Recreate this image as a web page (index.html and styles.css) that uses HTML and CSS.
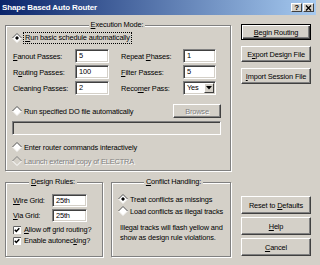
FILE: index.html
```html
<!DOCTYPE html>
<html lang="en">
<head>
    <meta charset="UTF-8">
    <title>Shape Based Auto Router</title>
    <link rel="stylesheet" href="styles.css">
</head>
<body>
    <svg class="sprite" xmlns="http://www.w3.org/2000/svg">
        <symbol id="radio" viewBox="0 0 10 10">
            <path d="M5 0.5 L9.5 5 L5 9.5 L0.5 5 Z" fill="#fff"/>
            <path d="M0.5 5 L5 0.5 L9.5 5" fill="none" stroke="#505050"/>
            <path d="M0.5 5 L5 9.5 L9.5 5" fill="none" stroke="#f4f3f0"/>
        </symbol>
        <symbol id="radio-on" viewBox="0 0 10 10">
            <path d="M5 0.5 L9.5 5 L5 9.5 L0.5 5 Z" fill="#fff"/>
            <path d="M0.5 5 L5 0.5 L9.5 5" fill="none" stroke="#505050"/>
            <path d="M0.5 5 L5 9.5 L9.5 5" fill="none" stroke="#f4f3f0"/>
            <path d="M5 3 L7 5 L5 7 L3 5 Z" fill="#000"/>
        </symbol>
        <symbol id="radio-off" viewBox="0 0 10 10">
            <path d="M5 0.5 L9.5 5 L5 9.5 L0.5 5 Z" fill="#d4d0c8"/>
            <path d="M0.5 5 L5 0.5 L9.5 5" fill="none" stroke="#808080"/>
            <path d="M0.5 5 L5 9.5 L9.5 5" fill="none" stroke="#fff"/>
        </symbol>
        <symbol id="check" viewBox="0 0 8 8">
            <rect width="8" height="8" fill="#fff"/>
            <path d="M0.5 8 V0.5 H8" fill="none" stroke="#606060"/>
            <path d="M1.8 3.8 L3.3 5.4 L6.3 2.2" fill="none" stroke="#000" stroke-width="1.5"/>
        </symbol>
    </svg>

    <div class="window">
        <div class="titlebar">
            <span class="title">Shape Based Auto Router</span>
            <div class="caption-btns">
                <span class="cap-btn">?</span>
                <span class="cap-btn">
                    <svg width="7" height="6" viewBox="0 0 7 6"><path d="M1 0.5 L6 5.5 M6 0.5 L1 5.5" stroke="#000" stroke-width="1.3"/></svg>
                </span>
            </div>
        </div>

        <div class="client">
            <div class="left">
                <fieldset class="group exec">
                    <legend><u>E</u>xecution Mode:</legend>
                    <div class="radio first">
                        <svg class="rb"><use href="#radio-on"/></svg>
                        <span class="focus"><u>R</u>un basic schedule automatically</span>
                    </div>

                    <div class="fields">
                        <span class="lbl"><u>F</u>anout Passes:</span>
                        <span class="edit short">5</span>
                        <span class="lbl">Repeat <u>P</u>hases:</span>
                        <span class="edit">1</span>

                        <span class="lbl">R<u>o</u>uting Passes:</span>
                        <span class="edit short">100</span>
                        <span class="lbl"><u>F</u>ilter Passes:</span>
                        <span class="edit">5</span>

                        <span class="lbl">Cleaning Passes:</span>
                        <span class="edit short">2</span>
                        <span class="lbl">Reco<u>m</u>er Pass:</span>
                        <span class="edit combo">
                            <span>Yes</span>
                            <span class="drop">
                                <svg width="6" height="4" viewBox="0 0 6 4"><path d="M0 0 H6 L3 3.5 Z" fill="#000"/></svg>
                            </span>
                        </span>
                    </div>

                    <div class="do-row">
                        <div class="radio">
                            <svg class="rb"><use href="#radio"/></svg>
                            <span>Run specified DO file automatically</span>
                        </div>
                        <button class="btn browse" disabled><span>Browse</span></button>
                    </div>
                    <div class="edit wide"></div>

                    <div class="radio interactive">
                        <svg class="rb"><use href="#radio"/></svg>
                        <span>Enter router commands interactively</span>
                    </div>
                    <div class="radio launch">
                        <svg class="rb"><use href="#radio-off"/></svg>
                        <span class="disabled">Launch external copy of ELECTRA</span>
                    </div>
                </fieldset>

                <div class="lower">
                    <fieldset class="group design">
                        <legend><u>D</u>esign Rules:</legend>
                        <div class="grid-row">
                            <span class="lbl"><u>W</u>ire Grid:</span>
                            <span class="edit">25th</span>
                        </div>
                        <div class="grid-row">
                            <span class="lbl"><u>V</u>ia Grid:</span>
                            <span class="edit">25th</span>
                        </div>
                        <div class="checks">
                            <div class="checkbox">
                                <svg class="cb"><use href="#check"/></svg>
                                <span><u>A</u>llow off grid routing?</span>
                            </div>
                            <div class="checkbox">
                                <svg class="cb"><use href="#check"/></svg>
                                <span>Enable autonec<u>k</u>ing?</span>
                            </div>
                        </div>
                    </fieldset>

                    <fieldset class="group conflict">
                        <legend><u>C</u>onflict Handling:</legend>
                        <div class="radio">
                            <svg class="rb"><use href="#radio-on"/></svg>
                            <span>Treat conflicts as missings</span>
                        </div>
                        <div class="radio">
                            <svg class="rb"><use href="#radio"/></svg>
                            <span>Load conflicts as illegal tracks</span>
                        </div>
                        <p class="note">Illegal tracks will flash yellow and<br>show as design rule violations.</p>
                    </fieldset>
                </div>
            </div>

            <div class="right">
                <div class="stack">
                    <button class="btn default"><span><u>B</u>egin Routing</span></button>
                    <button class="btn"><span>E<u>x</u>port Design File</span></button>
                    <button class="btn"><span><u>I</u>mport Session File</span></button>
                </div>
                <div class="stack bottom">
                    <button class="btn"><span>Reset to <u>D</u>efaults</span></button>
                    <button class="btn"><span><u>H</u>elp</span></button>
                    <button class="btn"><span><u>C</u>ancel</span></button>
                </div>
            </div>
        </div>
    </div>
</body>
</html>
```

FILE: styles.css
```css
* {
    box-sizing: border-box;
}
body {
    margin: 0;
    background: #d4d0c8;
    font-family: "Liberation Sans", Arial, sans-serif;
    font-size: 7.4px;
    letter-spacing: -0.15px;
    color: #000;
    white-space: nowrap;
}
.sprite {
    display: none;
}
.window {
    width: 320px;
    height: 265px;
    overflow: hidden;
    display: flex;
    flex-direction: column;
}
.titlebar {
    height: 15px;
    margin-right: 4px;
    padding: 0 2px 0 2px;
    display: flex;
    align-items: center;
    background: linear-gradient(to right, #0a246a, #a6caf0);
    color: #fff;
    font-weight: bold;
    font-size: 8px;
}
.caption-btns {
    margin-left: auto;
    display: flex;
    gap: 1px;
}
.cap-btn {
    width: 11px;
    height: 9px;
    display: flex;
    align-items: center;
    justify-content: center;
    background: #d4d0c8;
    border: 1px solid;
    border-color: #fff #404040 #404040 #fff;
    color: #000;
    font-size: 8px;
    line-height: 1;
}
.client {
    flex: 1;
    display: flex;
    gap: 10px;
    padding: 5px 9px 8px 5px;
}
.left {
    width: 226px;
    display: flex;
    flex-direction: column;
}
.right {
    width: 70px;
    display: flex;
    flex-direction: column;
    padding: 4px 0 1px 0;
}

/* group boxes */
.group {
    margin: 0;
    min-width: 0;
    padding: 0 9px 3px 7px;
    border: 1px solid #808080;
    box-shadow: inset 1px 1px #fff, 1px 1px #fff;
}
.group legend {
    margin: 0 auto;
    padding: 0 2px;
    line-height: 10px;
    background: #d4d0c8;
}

/* radios and checks */
.radio {
    display: flex;
    align-items: center;
    gap: 2px;
    height: 12px;
    margin-left: -1px;
}
.rb {
    width: 10px;
    height: 10px;
    flex: none;
}
.radio.first {
    margin-top: 2px;
}
.focus {
    outline: 1px dotted #000;
    padding: 0 1px;
    line-height: 10px;
}
.checkbox {
    display: flex;
    align-items: center;
    gap: 3px;
    height: 11px;
}
.cb {
    width: 8px;
    height: 8px;
    flex: none;
}
.disabled {
    color: #808080;
    text-shadow: 1px 1px #fff;
}

/* edit fields */
.edit {
    height: 14px;
    padding: 0 3px;
    line-height: 12px;
    background: #fff;
    border: 1px solid;
    border-color: #808080 #fff #fff #808080;
    box-shadow: inset 1px 1px #404040, inset -1px -1px #d4d0c8;
}
.fields {
    display: grid;
    grid-template-columns: 62px 46px 62px 33px;
    row-gap: 2px;
    align-items: center;
    margin-top: 5px;
}
.edit.short {
    width: 34px;
}
.combo {
    display: flex;
    align-items: center;
    justify-content: space-between;
    padding: 0 1px 0 3px;
}
.drop {
    width: 10px;
    height: 10px;
    display: flex;
    align-items: center;
    justify-content: center;
    background: #d4d0c8;
    border: 1px solid;
    border-color: #fff #404040 #404040 #fff;
}
.do-row {
    display: flex;
    align-items: center;
    justify-content: space-between;
    height: 14px;
    margin-top: 9px;
}
.edit.wide {
    margin: 3px 0 0 -1px;
    background: #d4d0c8;
}
.radio.interactive {
    margin-top: 6px;
}
.radio.launch {
    margin-top: 2px;
}

/* lower groups */
.lower {
    flex: 1;
    display: flex;
    gap: 8px;
    margin-top: 6px;
}
.design {
    width: 98px;
    padding-top: 7px;
}
.conflict {
    width: 120px;
    padding: 6px 2px 3px 7px;
}
.grid-row {
    display: flex;
    align-items: center;
    margin-bottom: 2px;
}
.grid-row .lbl {
    width: 39px;
}
.grid-row .edit {
    width: 35px;
    height: 13px;
    line-height: 11px;
}
.checks {
    margin-top: 1px;
}
.note {
    margin: 6px 0 0 1px;
    line-height: 10px;
}

/* buttons */
.btn {
    width: 70px;
    height: 16px;
    padding: 0;
    display: flex;
    align-items: center;
    justify-content: center;
    font: inherit;
    letter-spacing: inherit;
    color: #000;
    background: #d4d0c8;
    border: 1px solid;
    border-color: #fff #404040 #404040 #fff;
    box-shadow: inset -1px -1px #808080;
}
.btn.default {
    border-color: #000;
    box-shadow: inset 1px 1px #fff, inset -1px -1px #404040, inset -2px -2px #808080;
}
.btn.browse {
    width: 48px;
    height: 14px;
    color: #808080;
    text-shadow: 1px 1px #fff;
}
.stack {
    display: flex;
    flex-direction: column;
    gap: 6px;
}
.stack.bottom {
    margin-top: auto;
    gap: 3px;
}
.stack.bottom .btn {
    height: 18px;
}
```
